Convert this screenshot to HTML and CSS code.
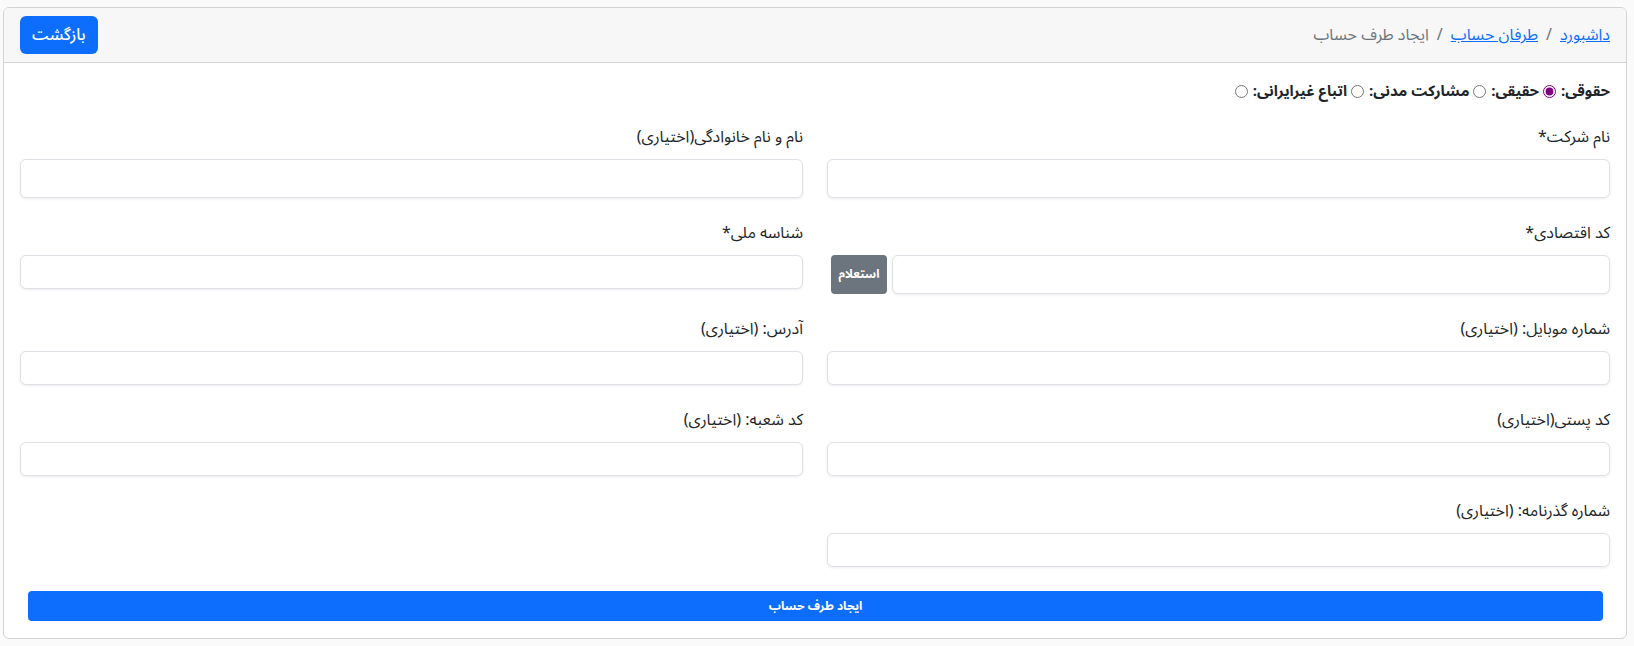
FILE: index.html
```html
<!DOCTYPE html>
<html lang="fa" dir="rtl">

<head>
    <meta charset="UTF-8">
    <meta name="viewport" content="width=device-width, initial-scale=1.0">
    <title>ایجاد طرف حساب</title>
    <link rel="stylesheet" href="styles.css">
</head>

<body>
    <div class="card">
        <div class="card-header">
            <nav class="breadcrumb">
                <a href="#">داشبورد</a>
                <span class="sep">/</span>
                <a href="#">طرفان حساب</a>
                <span class="sep">/</span>
                <span class="active">ایجاد طرف حساب</span>
            </nav>
            <a href="#" class="btn btn-primary">بازگشت</a>
        </div>

        <div class="card-body">
            <form id="account-form">
                <div class="type-row">
                    <label>حقوقی: <input type="radio" name="type" value="legal" checked></label>
                    <label>حقیقی: <input type="radio" name="type" value="real"></label>
                    <label>مشارکت مدنی: <input type="radio" name="type" value="civil"></label>
                    <label>اتباع غیرایرانی: <input type="radio" name="type" value="foreign"></label>
                </div>

                <div class="fields">
                    <div class="form-group">
                        <label for="companyName">نام شرکت*</label>
                        <input type="text" id="companyName" class="form-control tall">
                    </div>
                    <div class="form-group">
                        <label for="fullName">نام و نام خانوادگی(اختیاری)</label>
                        <input type="text" id="fullName" class="form-control tall">
                    </div>

                    <div class="form-group">
                        <label for="economicCode">کد اقتصادی*</label>
                        <div class="input-group">
                            <input type="text" id="economicCode" class="form-control tall">
                            <button type="button" class="btn-inquiry">استعلام</button>
                        </div>
                    </div>
                    <div class="form-group">
                        <label for="nationalId">شناسه ملی*</label>
                        <input type="text" id="nationalId" class="form-control">
                    </div>

                    <div class="form-group">
                        <label for="mobile">شماره موبایل: (اختیاری)</label>
                        <input type="text" id="mobile" class="form-control">
                    </div>
                    <div class="form-group">
                        <label for="address">آدرس: (اختیاری)</label>
                        <input type="text" id="address" class="form-control">
                    </div>

                    <div class="form-group">
                        <label for="postalCode">کد پستی(اختیاری)</label>
                        <input type="text" id="postalCode" class="form-control">
                    </div>
                    <div class="form-group">
                        <label for="branchCode">کد شعبه: (اختیاری)</label>
                        <input type="text" id="branchCode" class="form-control">
                    </div>

                    <div class="form-group">
                        <label for="passportNo">شماره گذرنامه: (اختیاری)</label>
                        <input type="text" id="passportNo" class="form-control">
                    </div>
                </div>

                <button type="submit" class="btn-submit">ایجاد طرف حساب</button>
            </form>
        </div>
    </div>
</body>

</html>
```

FILE: styles.css
```css
/* Page and card */
body {
    font-family: "Noto Sans Arabic", "Noto Sans", "DejaVu Sans", sans-serif;
    font-size: 16px;
    line-height: 24px;
    color: #212529;
    margin: 0;
    padding: 7px 7px 8px 3px;
    background-color: #fafafa;
}

.card {
    background-color: #fff;
    border: 1px solid #d4d4d4;
    border-radius: 6px;
    overflow: hidden;
}

.card-header {
    display: flex;
    justify-content: space-between;
    align-items: center;
    padding: 8px 16px;
    background-color: #f7f7f7;
    border-bottom: 1px solid #d4d4d4;
}

.breadcrumb {
    display: flex;
    align-items: center;
    color: #6c757d;
}

.breadcrumb a {
    color: #0d6efd;
    text-decoration: underline;
}

.breadcrumb .sep {
    padding: 0 8px;
    color: #6c757d;
}

.btn {
    display: inline-block;
    padding: 7px 12px;
    border-radius: 6px;
    text-decoration: none;
    font-weight: 500;
}

.btn-primary {
    background-color: #0d6efd;
    color: #fff;
}

.card-body {
    padding: 16px 16px 17px;
}

/* Type radios */
.type-row {
    display: flex;
    gap: 4px;
    font-size: 15px;
    font-weight: bold;
    margin-bottom: 22px;
}

.type-row input {
    accent-color: #800080;
    margin: 0 1px 0 0;
    vertical-align: -2px;
}

/* Fields */
.fields {
    display: grid;
    grid-template-columns: 1fr 1fr;
    column-gap: 24px;
    row-gap: 23px;
    align-items: start;
}

.form-group label {
    display: block;
    margin-bottom: 10px;
}

.form-control {
    display: block;
    width: 100%;
    box-sizing: border-box;
    height: 34px;
    padding: 6px 12px;
    border: 1px solid #dee2e6;
    border-radius: 6px;
    box-shadow: 0 1px 3px rgba(0, 0, 0, 0.08);
    font-family: inherit;
    font-size: 16px;
    background-color: #fff;
}

.form-control.tall {
    height: 39px;
}

.input-group {
    display: flex;
    gap: 5px;
    padding-left: 4px;
}

.input-group .form-control {
    flex: 1;
}

.btn-inquiry {
    width: 56px;
    height: 39px;
    border: none;
    border-radius: 4px;
    background-color: #6c757d;
    color: #fff;
    font-family: inherit;
    font-size: 12px;
    font-weight: bold;
    padding: 0;
}

.btn-submit {
    display: block;
    width: calc(100% - 15px);
    height: 30px;
    margin: 24px 7px 0 8px;
    border: none;
    border-radius: 4px;
    background-color: #0d6efd;
    color: #fff;
    font-family: inherit;
    font-size: 12px;
    font-weight: bold;
    cursor: pointer;
}
```
